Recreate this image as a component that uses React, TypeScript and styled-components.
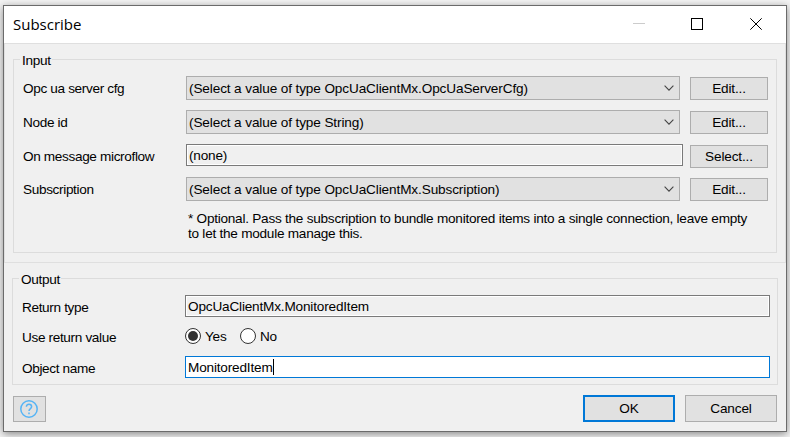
import React from "react";
import styled, { createGlobalStyle } from "styled-components";

const GlobalStyle = createGlobalStyle`
  * { box-sizing: border-box; }
  html, body { margin: 0; height: 100%; overflow: hidden; background: #f4f4f4; }
  body { font: 13.6px/15px "Liberation Sans", Arial, sans-serif; color: #000; }
  button, input { font: inherit; color: inherit; }
`;

const Desktop = styled.div`
  height: 437px;
  padding: 5px 3px;
`;

const Window = styled.main`
  display: flex;
  flex-direction: column;
  width: 784px;
  height: 427px;
  border: 1px solid #6b6b6b;
  background: #f0f0f0;
  box-shadow: 0 2px 8px rgba(0, 0, 0, 0.45);
`;

const TitleBar = styled.header`
  display: flex;
  align-items: center;
  justify-content: space-between;
  height: 37px;
  flex: none;
  padding: 0 24px 2px 9px;
  background: #fff;
`;

const Title = styled.h1`
  margin: 0;
  font: 400 15px/20px "Open Sans", "Noto Sans", sans-serif;
`;

const WindowControls = styled.div`
  display: flex;
  gap: 46px;
  svg { display: block; }
  svg:last-child { margin-left: 1px; }
`;

const InputPanel = styled.section`
  height: 220px;
  flex: none;
  border: 1px solid #dfdfdf;
  padding: 15px 8px 0;
`;

const OutputPanel = styled.section`
  padding: 15px 8px 0;
  height: 122px;
  flex: none;
`;

const Group = styled.div<{ $height: number; $wide?: boolean }>`
  height: ${(p) => p.$height}px;
  width: ${(p) => (p.$wide ? 766 : 764)}px;
  border: 1px solid #dcdcdc;
  display: flex;
  flex-direction: column;
`;

const Legend = styled.h2<{ $width: number }>`
  margin: -7px 0 0 6px;
  padding-left: 2px;
  width: ${(p) => p.$width}px;
  height: 15px;
  font: inherit;
  letter-spacing: -0.3px;
  background: #f0f0f0;
`;

const Row = styled.div<{ $height: number; $gap: number }>`
  display: grid;
  grid-template-columns: 163px 504px 78px;
  align-items: end;
  height: ${(p) => p.$height}px;
  margin-top: ${(p) => p.$gap}px;
  padding-left: 9px;
  flex: none;
`;

const Label = styled.span<{ $lift?: number }>`
  margin-bottom: ${(p) => p.$lift ?? 4}px;
  letter-spacing: -0.35px;
  white-space: nowrap;
`;

const Select = styled.button`
  display: flex;
  align-items: center;
  justify-content: space-between;
  width: 494px;
  height: 24px;
  padding: 0 5px 0 2px;
  border: 1px solid #adadad;
  background: #e1e1e1;
  letter-spacing: -0.12px;
  white-space: nowrap;
`;

const Field = styled.div<{ $width: number; $active?: boolean; $raised?: boolean }>`
  display: flex;
  align-items: center;
  width: ${(p) => p.$width}px;
  height: 22px;
  margin-bottom: ${(p) => (p.$raised ? 2 : 0)}px;
  padding-left: 2px;
  border: 1px solid ${(p) => (p.$active ? "#0078d7" : "#7a7a7a")};
  background: ${(p) => (p.$active ? "#fff" : "#f0f0f0")};
  box-shadow: inset 0 0 0 1px #fff;
  letter-spacing: -0.18px;
`;

const Caret = styled.span`
  width: 1px;
  height: 16px;
  background: #000;
`;

const Button = styled.button<{ $dialog?: boolean; $primary?: boolean }>`
  width: ${(p) => (p.$dialog ? 92 : 78)}px;
  height: ${(p) => (p.$dialog ? 27 : 23)}px;
  padding: 0;
  border: ${(p) => (p.$primary ? "2px solid #0078d7" : "1px solid #adadad")};
  background: #e1e1e1;
  letter-spacing: -0.15px;
`;

const Note = styled.p`
  margin: 10px 0 0 174px;
  white-space: nowrap;
  letter-spacing: -0.25px;
`;

const RadioGroup = styled.div`
  display: flex;
  gap: 12px;
  letter-spacing: -0.2px;
`;

const RadioOption = styled.span`
  display: flex;
  align-items: center;
  min-width: 43px;
  gap: 4px;
  svg { display: block; }
`;

const Footer = styled.footer`
  display: flex;
  align-items: flex-end;
  gap: 10px;
  padding: 0 9px;
  margin-top: 10px;
  height: 27px;
`;

const HelpButton = styled.button`
  display: flex;
  align-items: center;
  width: 33px;
  height: 26px;
  margin-right: auto;
  padding: 0 0 0 6px;
  border: 1px solid #adadad;
  background: #e1e1e1;
`;

const Chevron = () => (
  <svg width="10" height="6" viewBox="0 0 10 6" fill="none" stroke="#444" strokeWidth="1.1">
    <path d="M.6 .7 5 5.1 9.4 .7" />
  </svg>
);

const Radio = ({ checked }: { checked?: boolean }) => (
  <svg width="16" height="16" viewBox="0 0 16 16">
    <circle cx="8" cy="8" r="7.5" fill="#fff" stroke="#333" />
    {checked && <circle cx="8" cy="8" r="5" fill="#333" />}
  </svg>
);

export default function App() {
  return (
    <Desktop>
      <GlobalStyle />
      <Window>
        <TitleBar>
          <Title>Subscribe</Title>
          <WindowControls>
            <svg width="12" height="12" stroke="#ccc"><path d="M0 5.5H12" /></svg>
            <svg width="12" height="12" fill="none" stroke="#000"><rect x=".5" y=".5" width="11" height="11" /></svg>
            <svg width="12" height="12" stroke="#000"><path d="M.3 .3 11.7 11.7M11.7 .3.3 11.7" /></svg>
          </WindowControls>
        </TitleBar>
        <InputPanel>
          <Group $height={194}>
            <Legend $width={32}>Input</Legend>
            <Row $height={24} $gap={8}>
              <Label>Opc ua server cfg</Label>
              <Select>(Select a value of type OpcUaClientMx.OpcUaServerCfg)<Chevron /></Select>
              <Button>Edit...</Button>
            </Row>
            <Row $height={24} $gap={10}>
              <Label>Node id</Label>
              <Select>(Select a value of type String)<Chevron /></Select>
              <Button>Edit...</Button>
            </Row>
            <Row $height={24} $gap={10}>
              <Label>On message microflow</Label>
              <Field $width={497} $raised>(none)</Field>
              <Button>Select...</Button>
            </Row>
            <Row $height={24} $gap={9}>
              <Label>Subscription</Label>
              <Select>(Select a value of type OpcUaClientMx.Subscription)<Chevron /></Select>
              <Button>Edit...</Button>
            </Row>
            <Note>* Optional. Pass the subscription to bundle monitored items into a single connection, leave empty<br />to let the module manage this.</Note>
          </Group>
        </InputPanel>
        <OutputPanel>
          <Group $height={107} $wide>
            <Legend $width={42}>Output</Legend>
            <Row $height={22} $gap={8}>
              <Label $lift={2}>Return type</Label>
              <Field $width={585}>OpcUaClientMx.MonitoredItem</Field>
            </Row>
            <Row $height={16} $gap={11}>
              <Label $lift={-1}>Use return value</Label>
              <RadioGroup>
                <RadioOption><Radio checked />Yes</RadioOption>
                <RadioOption><Radio />No</RadioOption>
              </RadioGroup>
            </Row>
            <Row $height={22} $gap={12}>
              <Label $lift={2}>Object name</Label>
              <Field $width={585} $active>MonitoredItem<Caret /></Field>
            </Row>
          </Group>
        </OutputPanel>
        <Footer>
          <HelpButton aria-label="Help">
            <svg width="18" height="18" viewBox="0 0 18 18" fill="none" stroke="#56b4f5" strokeWidth="1.5">
              <circle cx="9" cy="9" r="8.2" />
              <path d="M6.4 6.8C6.4 3.4 11.6 3.6 11.6 6.7 11.6 8.6 9 8.6 9 11M9 12.5V14.2" />
            </svg>
          </HelpButton>
          <Button $dialog $primary>OK</Button>
          <Button $dialog>Cancel</Button>
        </Footer>
      </Window>
    </Desktop>
  );
}
